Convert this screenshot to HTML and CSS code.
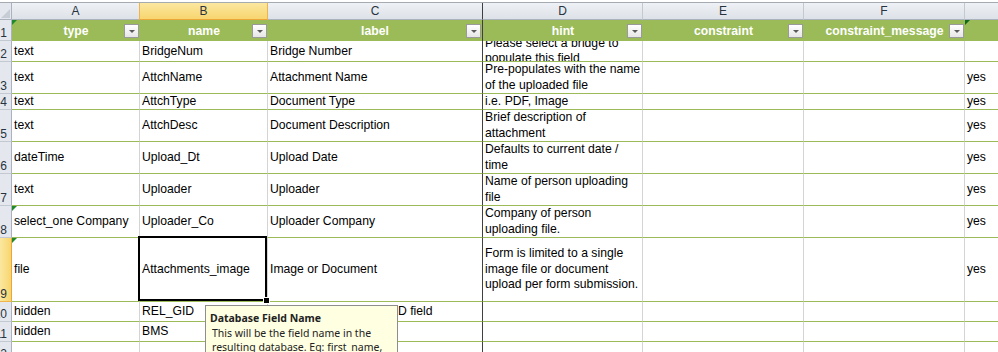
FILE: index.html
```html
<!DOCTYPE html>
<html lang="en">
<head>
    <meta charset="UTF-8">
    <title>survey.xlsx</title>
    <link rel="stylesheet" href="styles.css">
</head>
<body>
    <div class="sheet">
        <div class="grid">
            <!-- column letters -->
            <div class="corner"><span class="corner-tri"></span></div>
            <div class="ch">A</div>
            <div class="ch ch-sel">B</div>
            <div class="ch ch-split">C</div>
            <div class="ch">D</div>
            <div class="ch">E</div>
            <div class="ch">F</div>
            <div class="ch"></div>

            <!-- row 1: table header -->
            <div class="rh">1</div>
            <div class="th mark"><span></span><b>type</b><i class="dd"></i></div>
            <div class="th"><span></span><b>name</b><i class="dd"></i></div>
            <div class="th th-split"><span></span><b>label</b><i class="dd"></i></div>
            <div class="th"><span></span><b>hint</b><i class="dd"></i></div>
            <div class="th"><span></span><b>constraint</b><i class="dd"></i></div>
            <div class="th"><span></span><b>constraint_message</b><i class="dd"></i></div>
            <div class="th mark-dark"></div>

            <div class="rh">2</div>
            <div class="c">text</div>
            <div class="c">BridgeNum</div>
            <div class="c split">Bridge Number</div>
            <div class="c wrap">Please select a bridge to<br>populate this field</div>
            <div class="c"></div>
            <div class="c"></div>
            <div class="c"></div>

            <div class="rh">3</div>
            <div class="c">text</div>
            <div class="c">AttchName</div>
            <div class="c split">Attachment Name</div>
            <div class="c wrap">Pre-populates with the name<br>of the uploaded file</div>
            <div class="c"></div>
            <div class="c"></div>
            <div class="c">yes</div>

            <div class="rh">4</div>
            <div class="c">text</div>
            <div class="c">AttchType</div>
            <div class="c split">Document Type</div>
            <div class="c wrap">i.e. PDF, Image</div>
            <div class="c"></div>
            <div class="c"></div>
            <div class="c">yes</div>

            <div class="rh">5</div>
            <div class="c">text</div>
            <div class="c">AttchDesc</div>
            <div class="c split">Document Description</div>
            <div class="c wrap">Brief description of<br>attachment</div>
            <div class="c"></div>
            <div class="c"></div>
            <div class="c">yes</div>

            <div class="rh">6</div>
            <div class="c">dateTime</div>
            <div class="c">Upload_Dt</div>
            <div class="c split">Upload Date</div>
            <div class="c wrap">Defaults to current date /<br>time</div>
            <div class="c"></div>
            <div class="c"></div>
            <div class="c">yes</div>

            <div class="rh">7</div>
            <div class="c">text</div>
            <div class="c">Uploader</div>
            <div class="c split">Uploader</div>
            <div class="c wrap">Name of person uploading<br>file</div>
            <div class="c"></div>
            <div class="c"></div>
            <div class="c">yes</div>

            <div class="rh">8</div>
            <div class="c mark">select_one Company</div>
            <div class="c">Uploader_Co</div>
            <div class="c split">Uploader Company</div>
            <div class="c wrap">Company of person<br>uploading file.</div>
            <div class="c"></div>
            <div class="c"></div>
            <div class="c">yes</div>

            <div class="rh rh-sel">9</div>
            <div class="c mark">file</div>
            <div class="c active">Attachments_image</div>
            <div class="c split">Image or Document</div>
            <div class="c wrap">Form is limited to a single<br>image file or document<br>upload per form submission.</div>
            <div class="c"></div>
            <div class="c"></div>
            <div class="c">yes</div>

            <div class="rh">10</div>
            <div class="c">hidden</div>
            <div class="c">REL_GID</div>
            <div class="c split">Related records GlobalID field</div>
            <div class="c"></div>
            <div class="c"></div>
            <div class="c"></div>
            <div class="c"></div>

            <div class="rh">11</div>
            <div class="c">hidden</div>
            <div class="c">BMS</div>
            <div class="c split"></div>
            <div class="c"></div>
            <div class="c"></div>
            <div class="c"></div>
            <div class="c"></div>

            <div class="rh">12</div>
            <div class="c"></div>
            <div class="c"></div>
            <div class="c split"></div>
            <div class="c"></div>
            <div class="c"></div>
            <div class="c"></div>
            <div class="c"></div>
        </div>

        <div class="comment">
            <div class="comment-title">Database Field Name</div>
            <div class="comment-body">This will be the field name in the<br>resulting database. Eg: first_name,<br>last_name</div>
        </div>
    </div>
</body>
</html>
```

FILE: styles.css
```css
body {
    margin: 0;
    background: #fff;
    overflow: hidden;
    font-family: "Liberation Sans", Arial, sans-serif;
}
.sheet {
    position: relative;
    padding-top: 2px;
}
.grid {
    display: grid;
    grid-template-columns: 12px 128px 128px 215px 160px 161px 161px 60px;
    grid-template-rows: 17px 21px 21px 32px 16px 32px 32px 32px 32px 64px 20px 20px 20px;
    border-top: 1px solid #a6abb1;
    font-size: 12.2px;
    color: #000;
}
.grid > div {
    box-sizing: border-box;
    min-width: 0;
}

/* column letters */
.corner {
    background: #e4e8ee;
    border-right: 1px solid #a9b2bd;
    border-bottom: 1px solid #a9b2bd;
    position: relative;
    overflow: hidden;
}
.corner-tri {
    position: absolute;
    right: 1px;
    bottom: 1px;
    border-left: 9px solid transparent;
    border-bottom: 9px solid #c7cdd4;
}
.ch {
    background: linear-gradient(#eef1f5, #dde2e8);
    border-right: 1px solid #c3c9d1;
    border-bottom: 1px solid #a9b2bd;
    display: flex;
    align-items: center;
    justify-content: center;
    font-size: 12px;
    color: #27333f;
}
.ch-sel {
    background: linear-gradient(#fbe7a0, #f8d66f);
    border-right: 1px solid #f0b44d;
    border-left: 1px solid #f0b44d;
    border-bottom: 1px solid #eca53b;
    margin-left: -1px;
}
.ch-split {
    border-right-color: #404040;
}

/* row numbers */
.rh {
    background: #e4e8ee;
    border-right: 1px solid #a9b2bd;
    border-bottom: 1px solid #c3c9d1;
    display: flex;
    align-items: flex-end;
    justify-content: flex-end;
    padding-right: 4px;
    overflow: hidden;
    white-space: nowrap;
    font-size: 12px;
    color: #27333f;
    line-height: 14px;
}
.rh-sel {
    background: linear-gradient(90deg, #fbe7a0, #f8d66f);
    border-right-color: #eca53b;
    border-bottom-color: #f0b44d;
}

/* table header row */
.th {
    background: #9bbb59;
    color: #fff;
    display: grid;
    grid-template-columns: 1fr auto 1fr;
    align-items: center;
    position: relative;
    white-space: nowrap;
}
.th b {
    font-weight: bold;
}
.th-split {
    border-right: 1px solid #404040;
}
.dd {
    justify-self: end;
    margin-right: 1px;
    width: 15px;
    height: 14px;
    box-sizing: border-box;
    border: 1px solid #9a9a9a;
    background: linear-gradient(#ffffff, #e6e6e6);
    display: flex;
    align-items: center;
    justify-content: center;
}
.dd::after {
    content: "";
    border-left: 3px solid transparent;
    border-right: 3px solid transparent;
    border-top: 3px solid #5a5a5a;
    margin-top: 1px;
}

/* data cells */
.c {
    border-right: 1px solid #d4d4d4;
    border-bottom: 1px solid #9bbb59;
    display: flex;
    align-items: center;
    padding: 0 2px 0 2px;
    overflow: hidden;
    white-space: nowrap;
    line-height: 15px;
}
.split {
    border-right-color: #404040;
}
.wrap {
    line-height: 15.5px;
}
.mark,
.mark-dark {
    position: relative;
}
.mark::before,
.mark-dark::before {
    content: "";
    position: absolute;
    top: 0;
    left: 0;
    border-top: 5px solid #1e8a2c;
    border-right: 5px solid transparent;
}
.mark-dark::before {
    border-top-color: #0f6a1c;
}

/* active cell */
.active {
    position: relative;
    overflow: visible;
}
.active::after {
    content: "";
    position: absolute;
    top: -2px;
    left: -2px;
    right: 0;
    bottom: 0;
    border: 2px solid #000;
}
.active::before {
    content: "";
    position: absolute;
    right: -3px;
    bottom: -3px;
    width: 5px;
    height: 5px;
    background: #000;
    border: 1px solid #fff;
    z-index: 2;
}

/* comment popup */
.comment {
    position: absolute;
    left: 205px;
    top: 305px;
    width: 193px;
    height: 62px;
    box-sizing: border-box;
    background: #ffffe1;
    border: 1px solid #8e8e8e;
    padding: 5px 4px 3px;
    font-family: "Noto Sans", "DejaVu Sans", sans-serif;
    font-size: 10.5px;
    line-height: 14.5px;
    color: #222;
}
.comment-title {
    font-weight: bold;
}
.comment-body {
    padding-left: 2px;
}
```
